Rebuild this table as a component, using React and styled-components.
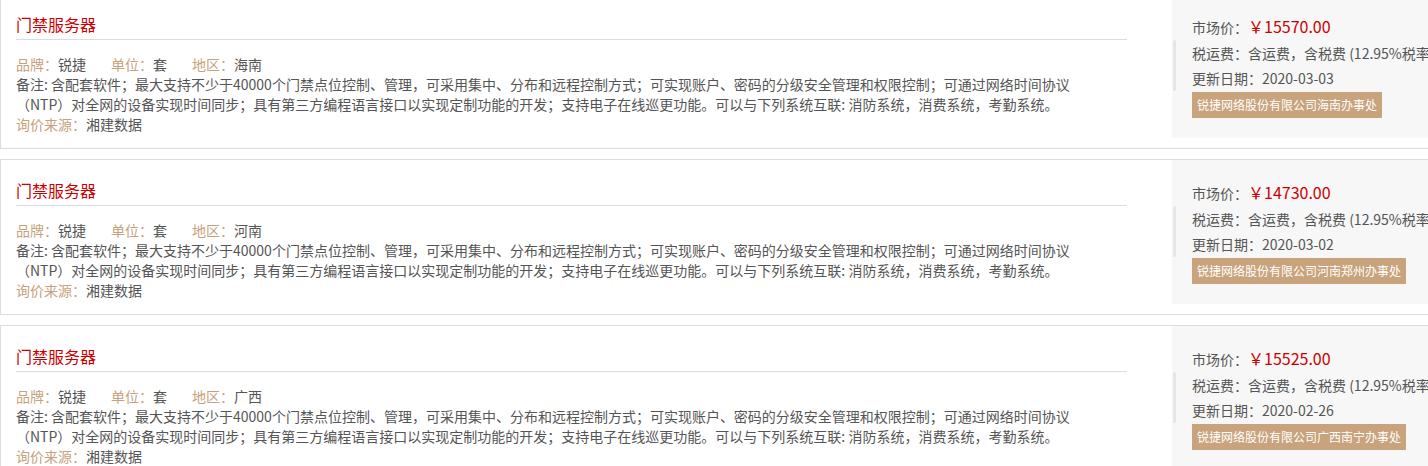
import React from 'react';
import styled, { createGlobalStyle } from 'styled-components';

const GlobalStyle = createGlobalStyle`
  html, body {
    margin: 0;
    padding: 0;
    background: #fff;
    overflow: hidden;
  }
  body {
    font-family: "Microsoft YaHei", "Noto Sans CJK SC", sans-serif;
    font-size: 14px;
    color: #555;
  }
`;

const Page = styled.div`
  width: 100vw;
  overflow: hidden;
`;

const List = styled.div`
  margin-top: -7px;
`;

const Card = styled.div`
  display: flex;
  width: 1480px;
  border: 1px solid #dcdcdc;
  margin-bottom: 10px;
  background: #fff;
`;

const Main = styled.div`
  flex: 0 0 1111px;
  margin-left: 15px;
  padding: 19px 0 14px;
`;

const Title = styled.h3`
  margin: 0 0 14px;
  padding-bottom: 4px;
  border-bottom: 1px solid #dcdcdc;
  font-size: 16px;
  font-weight: normal;
  line-height: 22px;
  color: #cc0000;
`;

const InfoRow = styled.div`
  display: flex;
  line-height: 20px;
`;

const InfoItem = styled.span`
  margin-right: 25px;
`;

const Label = styled.span`
  color: #c6a27c;
`;

const Value = styled.span`
  color: #555;
`;

const Remark = styled.div`
  line-height: 20px;
  white-space: nowrap;
  color: #555;
`;

const Source = styled.div`
  line-height: 20px;
`;

const Side = styled.div`
  position: relative;
  flex: 1;
  align-self: flex-start;
  margin-left: 45px;
  padding: 20px 20px;
  background: #f7f7f7;
  white-space: nowrap;

  &::before {
    content: '';
    position: absolute;
    left: 1px;
    top: 46px;
    width: 3px;
    height: 51px;
    border-radius: 2px;
    background: #e6e6e6;
  }
`;

const SideLine = styled.div`
  line-height: 25.5px;
  color: #555;
`;

const Price = styled.span`
  font-size: 16px;
  color: #cc0000;
`;

const Badge = styled.div`
  display: inline-block;
  padding: 0 5px;
  line-height: 26px;
  font-size: 12px;
  color: #fff;
  background: #c8a37b;
`;

const remarkLine1 =
  '备注: 含配套软件；最大支持不少于40000个门禁点位控制、管理，可采用集中、分布和远程控制方式；可实现账户、密码的分级安全管理和权限控制；可通过网络时间协议';
const remarkLine2 =
  '（NTP）对全网的设备实现时间同步；具有第三方编程语言接口以实现定制功能的开发；支持电子在线巡更功能。可以与下列系统互联: 消防系统，消费系统，考勤系统。';

const items = [
  { region: '海南', price: '15570.00', date: '2020-03-03', office: '锐捷网络股份有限公司海南办事处' },
  { region: '河南', price: '14730.00', date: '2020-03-02', office: '锐捷网络股份有限公司河南郑州办事处' },
  { region: '广西', price: '15525.00', date: '2020-02-26', office: '锐捷网络股份有限公司广西南宁办事处' },
];

const ProductCard = ({ item }) => (
  <Card>
    <Main>
      <Title>门禁服务器</Title>
      <InfoRow>
        <InfoItem><Label>品牌：</Label><Value>锐捷</Value></InfoItem>
        <InfoItem><Label>单位：</Label><Value>套</Value></InfoItem>
        <InfoItem><Label>地区：</Label><Value>{item.region}</Value></InfoItem>
      </InfoRow>
      <Remark>{remarkLine1}</Remark>
      <Remark>{remarkLine2}</Remark>
      <Source><Label>询价来源：</Label><Value>湘建数据</Value></Source>
    </Main>
    <Side>
      <SideLine>市场价：<Price>￥{item.price}</Price></SideLine>
      <SideLine>税运费：含运费，含税费 (12.95%税率)</SideLine>
      <SideLine>更新日期：{item.date}</SideLine>
      <Badge>{item.office}</Badge>
    </Side>
  </Card>
);

export default function App() {
  return (
    <Page>
      <GlobalStyle />
      <List>
        {items.map((item) => (
          <ProductCard key={item.region} item={item} />
        ))}
      </List>
    </Page>
  );
}
